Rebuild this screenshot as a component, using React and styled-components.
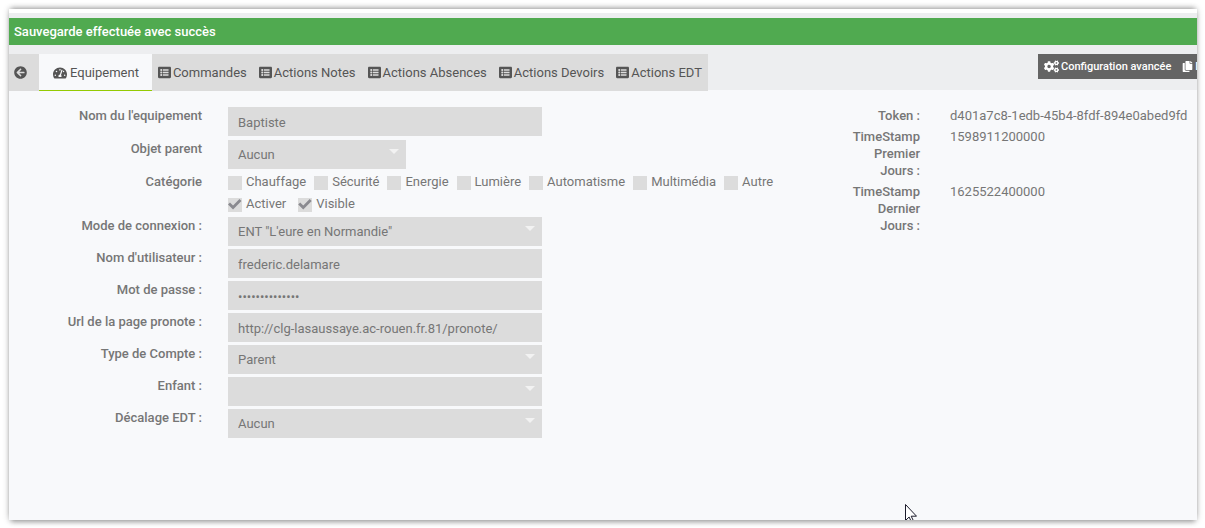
import { useState } from "react"
import styled, { createGlobalStyle } from "styled-components"
import { FaArrowCircleLeft, FaTachometerAlt, FaListAlt, FaCogs, FaCopy } from "react-icons/fa"

const CATEGORIES = ["Chauffage", "Sécurité", "Energie", "Lumière", "Automatisme", "Multimédia", "Autre"]

const TABS = ["Commandes", "Actions Notes", "Actions Absences", "Actions Devoirs", "Actions EDT"]

function Field({ id, label, children }) {
    return (
        <Row>
            <Label htmlFor={id}>{label}</Label>
            {children}
        </Row>
    )
}

function SelectBox({ id, options, small }) {
    return (
        <SelectWrap $small={small}>
            <Select id={id}>
                {options.map(option => (
                    <option key={option}>{option}</option>
                ))}
            </Select>
            <Caret />
        </SelectWrap>
    )
}

function App() {
    const [name, setName] = useState("Baptiste")
    const [user, setUser] = useState("frederic.delamare")
    const [password, setPassword] = useState("motdepasse1234")
    const [url, setUrl] = useState("http://clg-lasaussaye.ac-rouen.fr.81/pronote/")

    return (
        <>
            <GlobalStyle />
            <Page>
                <TopStrip />
                <Alert role="status">Sauvegarde effectuée avec succès</Alert>
                <Toolbar>
                    <Tabs>
                        <BackButton type="button" aria-label="Retour">
                            <FaArrowCircleLeft size={13} />
                        </BackButton>
                        <Tab href="#equipement" $active>
                            <FaTachometerAlt size={14} />
                            Equipement
                        </Tab>
                        {TABS.map(tab => (
                            <Tab key={tab} href="#commandes">
                                <FaListAlt size={13} />
                                {tab}
                            </Tab>
                        ))}
                    </Tabs>
                    <Actions>
                        <ActionButton type="button">
                            <FaCogs size={15} />
                            Configuration avancée
                        </ActionButton>
                        <ActionButton type="button">
                            <FaCopy size={11} />
                            Dupliquer
                        </ActionButton>
                    </Actions>
                </Toolbar>
                <Content>
                    <form>
                        <Section $gap={4}>
                            <Field id="name" label="Nom du l'equipement">
                                <Input id="name" value={name} onChange={e => setName(e.target.value)} />
                            </Field>
                            <Field id="parent" label="Objet parent">
                                <SelectBox id="parent" options={["Aucun"]} small />
                            </Field>
                            <Row role="group" aria-labelledby="category">
                                <Label as="span" id="category">Catégorie</Label>
                                <div>
                                    <Checks>
                                        {CATEGORIES.map(category => (
                                            <CheckLabel key={category}>
                                                <Checkbox />
                                                {category}
                                            </CheckLabel>
                                        ))}
                                    </Checks>
                                    <Checks $wide>
                                        <CheckLabel>
                                            <Checkbox defaultChecked />
                                            Activer
                                        </CheckLabel>
                                        <CheckLabel>
                                            <Checkbox defaultChecked />
                                            Visible
                                        </CheckLabel>
                                    </Checks>
                                </div>
                            </Row>
                        </Section>
                        <Section $gap={3}>
                            <Field id="mode" label="Mode de connexion :">
                                <SelectBox id="mode" options={['ENT "L\'eure en Normandie"']} />
                            </Field>
                            <Field id="user" label="Nom d'utilisateur :">
                                <Input id="user" value={user} onChange={e => setUser(e.target.value)} />
                            </Field>
                            <Field id="password" label="Mot de passe :">
                                <Input id="password" type="password" value={password} onChange={e => setPassword(e.target.value)} />
                            </Field>
                            <Field id="url" label="Url de la page pronote :">
                                <Input id="url" value={url} onChange={e => setUrl(e.target.value)} />
                            </Field>
                            <Field id="account" label="Type de Compte :">
                                <SelectBox id="account" options={["Parent"]} />
                            </Field>
                            <Field id="child" label="Enfant :">
                                <SelectBox id="child" options={[""]} />
                            </Field>
                            <Field id="offset" label="Décalage EDT :">
                                <SelectBox id="offset" options={["Aucun"]} />
                            </Field>
                        </Section>
                    </form>
                    <Infos>
                        <dt>Token :</dt>
                        <dd>d401a7c8-1edb-45b4-8fdf-894e0abed9fd</dd>
                        <dt>TimeStamp Premier Jours :</dt>
                        <dd>1598911200000</dd>
                        <dt>TimeStamp Dernier Jours :</dt>
                        <dd>1625522400000</dd>
                    </Infos>
                </Content>
                <Pointer width="12" height="16" viewBox="0 0 12 16" aria-hidden="true">
                    <path d="M.5.5v16l3.6-3.5 2.4 5 2-1-2.3-4.8h5.3z" fill="#fff" stroke="#1b1b2b" />
                </Pointer>
            </Page>
        </>
    )
}

export default App


const GlobalStyle = createGlobalStyle`
    * {
        box-sizing: border-box;
    }

    body {
        margin: 0;
        background-color: #fff;
        color: #767676;
        font-family: Roboto, "Liberation Sans", sans-serif;
        font-size: 13px;
        line-height: 17px;
    }

    input, select, button {
        font: inherit;
        color: inherit;
    }
`

const Page = styled.div`
    position: relative;
    display: flex;
    flex-direction: column;
    min-height: calc(100vh - 17px);
    margin: 9px 8px 8px 9px;
    background-color: #f8f9fb;
    box-shadow:
        0 4px 5px -2px rgba(0, 0, 0, 0.3),
        0 -3px 5px -2px rgba(0, 0, 0, 0.3),
        0 0 7px rgba(0, 0, 0, 0.2);
    overflow: hidden;
`

const TopStrip = styled.div`
    height: 9px;
    background-color: #edeef0;
    border-top: 4px solid #fff;
`

const Alert = styled.div`
    padding: 5px;
    background-color: #50aa50;
    color: #fff;
    font-weight: 500;
`

const Toolbar = styled.div`
    display: flex;
    justify-content: space-between;
    align-items: flex-start;
    height: 45px;
    padding-top: 9px;
    background-color: #edeef0;
`

const Tabs = styled.nav`
    display: flex;
    height: 37px;
    background-color: #dcdcdc;
    color: #555;
`

const BackButton = styled.button`
    display: flex;
    align-items: center;
    width: 30px;
    padding: 0 5px;
    border: 0;
    background: none;
`

const Tab = styled.a`
    display: flex;
    align-items: center;
    gap: ${props => (props.$active ? 3 : 2)}px;
    padding: ${props => (props.$active ? "1px 13px 0 14px" : "0 6px")};
    background-color: ${props => (props.$active ? "#f8f9fb" : "transparent")};
    border-bottom: ${props => (props.$active ? "1px solid #94ca02" : "0")};
    color: inherit;
    text-decoration: none;
    white-space: nowrap;
`

const Actions = styled.div`
    display: flex;
    flex: none;
    width: 159px;
    overflow: hidden;
    background-color: #646464;
`

const ActionButton = styled.button`
    display: flex;
    flex: none;
    align-items: center;
    gap: 2px;
    height: 25px;
    padding: 0 5px 0 6px;
    border: 0;
    background: none;
    color: #fff;
    font-size: 11px;
    font-weight: 500;
`

const Content = styled.main`
    display: grid;
    grid-template-columns: 2fr 1fr;
    padding-top: 17px;
`

const Section = styled.div`
    display: grid;
    gap: ${props => props.$gap}px;
`

const Row = styled.div`
    display: grid;
    grid-template-columns: 193px 1fr;
    column-gap: 26px;
    align-items: start;
`

const Label = styled.label`
    font-weight: 500;
    text-align: right;
`

const Input = styled.input`
    width: 314px;
    height: 29px;
    padding: 1px 10px 0;
    border: 0;
    border-radius: 0;
    background-color: #dcdcdc;
`

const SelectWrap = styled.div`
    position: relative;
    width: ${props => (props.$small ? 178 : 314)}px;
`

const Select = styled.select`
    display: block;
    width: 100%;
    height: 29px;
    padding: 0 10px;
    border: 0;
    border-radius: 0;
    background-color: #dcdcdc;
    appearance: none;
`

const Caret = styled.span`
    position: absolute;
    top: 9px;
    right: 7px;
    border: 5px solid transparent;
    border-top-color: #f2f2f2;
    border-bottom: 0;
    pointer-events: none;
`

const Checks = styled.div`
    display: flex;
    gap: ${props => (props.$wide ? 12 : 8)}px;
    height: 22px;
`

const CheckLabel = styled.label`
    display: flex;
    gap: 4px;
`

const Checkbox = styled.input.attrs({ type: "checkbox" })`
    appearance: none;
    width: 14px;
    height: 14px;
    margin: 3px 0 0;
    background-color: #dcdcdc;

    &:checked::after {
        content: "";
        display: block;
        width: 14px;
        height: 14px;
        background-color: #8a8a90;
        clip-path: polygon(0 46%, 14% 32%, 36% 54%, 82% 8%, 96% 22%, 36% 82%);
    }
`

const Infos = styled.dl`
    display: grid;
    grid-template-columns: 70px 1fr;
    align-content: start;
    gap: 4px 30px;
    margin: 0;
    padding-left: 49px;

    > dt {
        font-weight: 500;
        text-align: right;
    }

    > dd {
        margin: 0;
    }
`

/* mouse pointer lying over the page */
const Pointer = styled.svg`
    position: absolute;
    right: 280px;
    bottom: 0;
`
